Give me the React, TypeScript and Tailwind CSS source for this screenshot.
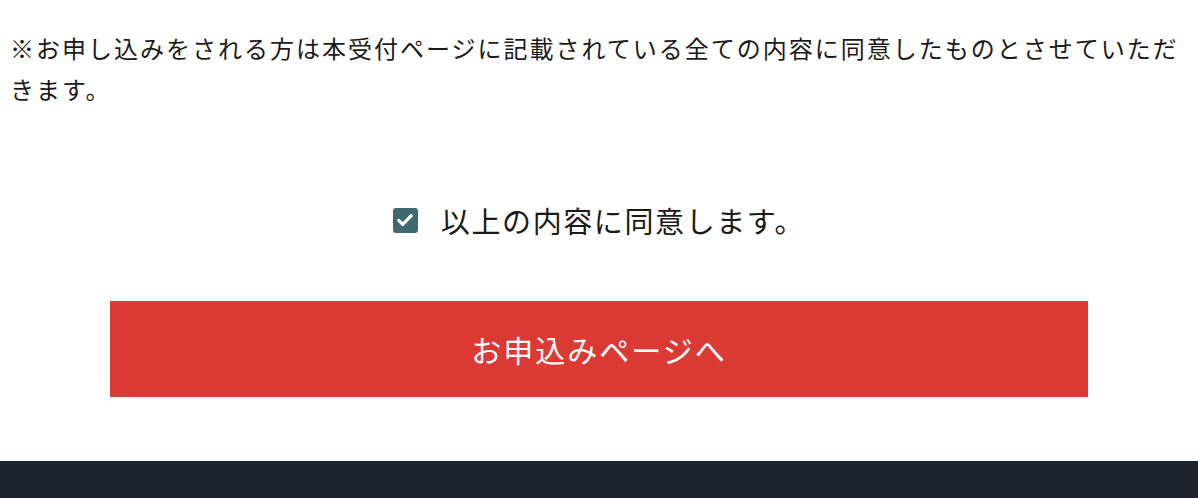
import { useState } from "react"

const jp = { fontFamily: '"Noto Sans CJK JP", "Noto Sans", sans-serif' }

function AgreeCheck() {
  const [checked, setChecked] = useState(true)
  return (
    <label className="flex cursor-pointer items-center justify-center gap-[23px]">
      <span
        onClick={() => setChecked(!checked)}
        className={
          "flex h-[25px] w-[25px] items-center justify-center rounded-[3px] " +
          (checked ? "bg-[#3e6a6d]" : "border border-gray-400 bg-white")
        }
      >
        {checked && (
          <svg viewBox="0 0 24 24" className="h-[20px] w-[20px]" fill="none">
            <path d="M4.5 12.5l4.8 4.8L19.5 6.8" stroke="#fff" strokeWidth="3.8" strokeLinecap="round" strokeLinejoin="round" />
          </svg>
        )}
      </span>
      <span className="text-[29px] leading-[40px] tracking-[1.6px] text-[#1a1a1a]">以上の内容に同意します。</span>
    </label>
  )
}

export default function App() {
  return (
    <div className="flex min-h-[498px] flex-col bg-white" style={jp}>
      <div className="px-[10px] pt-[27px]">
        <p className="text-[24px] leading-[41px] tracking-[2px] text-[#1a1a1a]">
          ※お申し込みをされる方は本受付ページに記載されている全ての内容に同意したものとさせていただきます。
        </p>
      </div>

      <div className="mt-[91px]">
        <AgreeCheck />
      </div>

      <div className="mt-[61px] flex justify-center">
        <button className="flex h-[96px] w-[978px] items-center justify-center bg-[#db3a34] text-[30px] tracking-[2px] text-white">
          お申込みページへ
        </button>
      </div>

      <footer className="mt-[64px] h-[37px] flex-1 bg-[#1d232d]" />
    </div>
  )
}
